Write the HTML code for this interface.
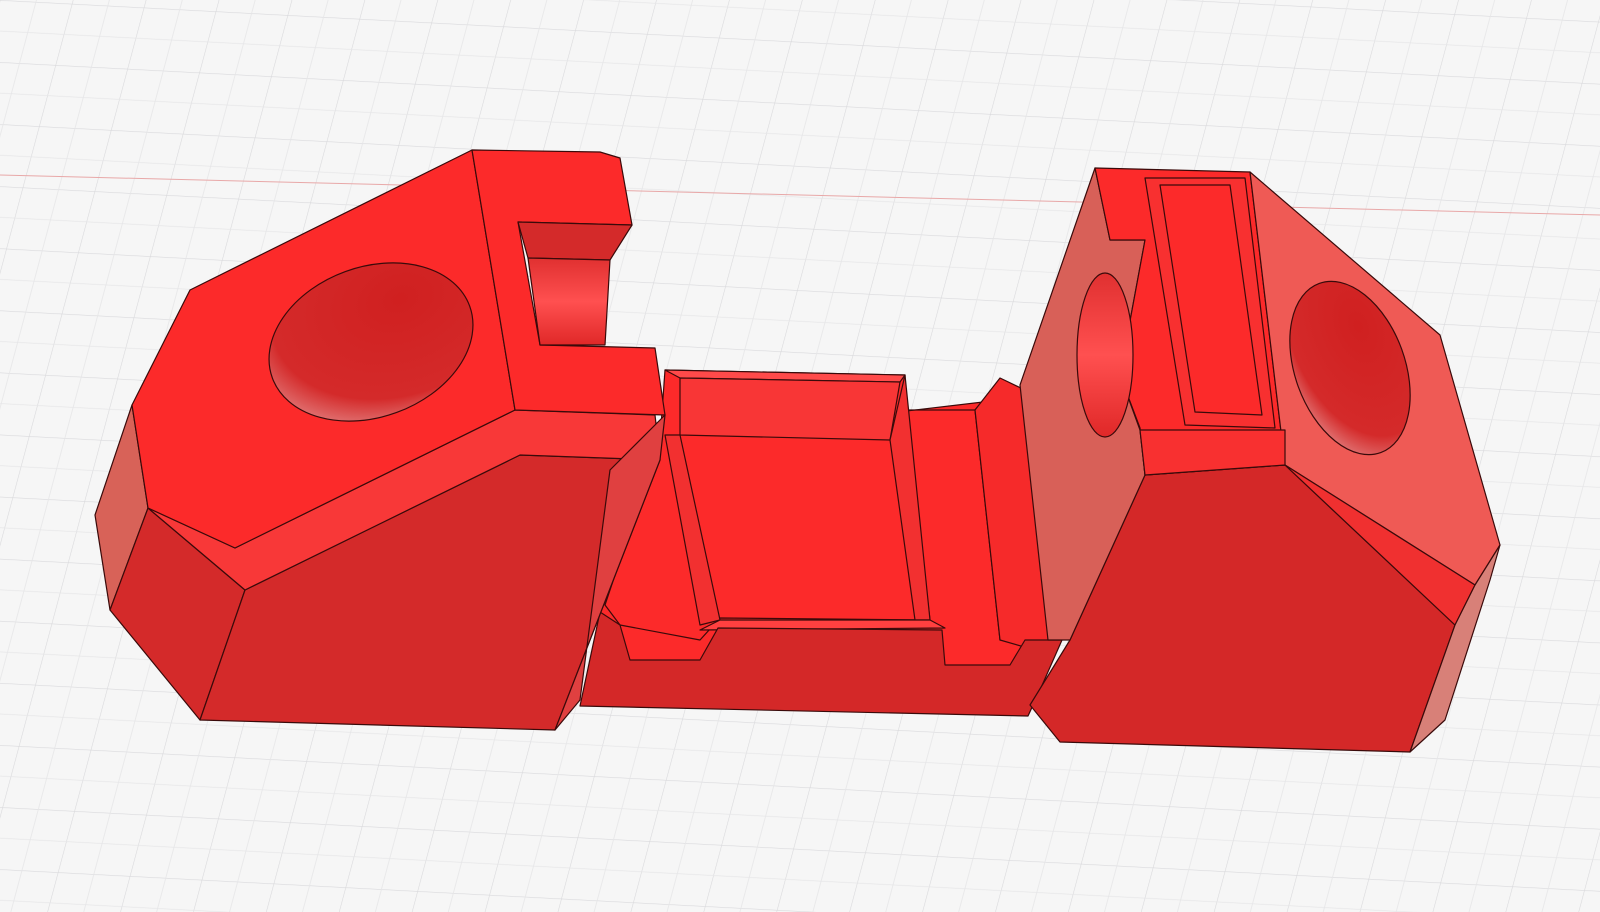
<!DOCTYPE html>
<html><head><meta charset="utf-8"><style>
html,body{margin:0;padding:0;background:#f5f5f5;width:1600px;height:912px;overflow:hidden}
svg{display:block}
</style></head><body>
<svg width="1600" height="912" viewBox="0 0 1600 912" xmlns="http://www.w3.org/2000/svg">
<defs>
<pattern id="g" width="72" height="62" patternUnits="userSpaceOnUse" patternTransform="rotate(3) skewX(-12)">
<rect width="72" height="62" fill="#f6f6f6"/>
<path d="M0 0H72M0 0V62" stroke="#d9d9dc" stroke-width="1.2" fill="none"/>
<path d="M0 31H72M36 0V62" stroke="#e6e6e8" stroke-width="0.8" fill="none"/>
</pattern>
<radialGradient id="hole" cx="0.7" cy="0.3" r="0.9">
<stop offset="0" stop-color="#d02020"/><stop offset="0.7" stop-color="#d42a2a"/><stop offset="1" stop-color="#e8a0a0"/>
</radialGradient>
<linearGradient id="cyl" x1="0" y1="0" x2="0" y2="1">
<stop offset="0" stop-color="#e03030"/><stop offset="0.5" stop-color="#ff5050"/><stop offset="1" stop-color="#e02828"/>
</linearGradient>
</defs>
<rect width="1600" height="912" fill="url(#g)"/>
<line x1="0" y1="175" x2="1600" y2="215" stroke="#e8a8a8" stroke-width="1"/>
<g stroke="#3a0a0a" stroke-width="1.2" stroke-linejoin="round">
<!-- middle bed -->
<polygon points="610,470 660,440 1000,400 1060,640 1030,700 590,700 600,610" fill="#fc2a2a"/>
<polygon points="665,370 905,375 905,410 975,410 1000,380 1025,395 1050,640 1000,640 975,410 905,410 930,620 720,618 700,640 620,625 605,605 660,440" fill="#fc2a2a"/>
<polygon points="665,370 680,378 900,382 905,375" fill="#ff4a4a"/>
<polygon points="680,378 900,382 890,440 680,435" fill="#f83636"/>
<polygon points="665,435 680,435 720,620 700,625" fill="#f23030"/>
<polygon points="890,440 905,375 930,620 915,620" fill="#f23030"/>
<polygon points="720,620 700,630 945,628 930,620" fill="#ff4040"/>
<polygon points="975,410 1000,378 1025,390 1050,640 1035,650 1000,640" fill="#f62a2a"/>
<!-- middle base front -->
<polygon points="600,612 620,625 630,660 700,660 718,628 942,630 945,665 1010,665 1025,640 1062,640 1040,690 1028,716 580,706" fill="#d42828"/>
<!-- left block -->
<polygon points="95,515 132,405 148,508 110,610" fill="#d86258"/>
<polygon points="110,610 148,508 245,590 200,720" fill="#d42a2a"/>
<polygon points="245,590 520,455 660,460 555,730 200,720" fill="#d42a2a"/>
<polygon points="148,508 235,548 515,410 655,415 660,460 520,455 245,590" fill="#f83838"/>
<polygon points="132,405 190,290 472,150 515,410 235,548 148,508" fill="#fc2a2a"/>
<polygon points="472,150 600,152 620,158 632,225 518,222 540,345 655,348 665,415 515,410" fill="#fc2a2a"/>
<polygon points="518,222 632,225 610,260 528,258" fill="#d42a2a"/>
<polygon points="528,258 610,260 605,345 540,345" fill="url(#cyl)"/>
<polygon points="555,730 660,460 665,415 610,470 580,700" fill="#e04040"/>
<ellipse cx="371" cy="342" rx="105" ry="75" transform="rotate(-20 371 342)" fill="url(#hole)"/>
<!-- right block -->
<polygon points="1145,475 1285,465 1455,625 1410,752 1060,742 1030,705 1070,640" fill="#d42828"/>
<polygon points="1020,385 1095,168 1110,240 1145,240 1120,375 1140,430 1145,475 1070,640 1048,640" fill="#d86058"/>
<polygon points="1095,168 1250,172 1285,465 1145,475 1140,428 1120,375 1145,240 1110,240" fill="#fc2a2a"/>
<polygon points="1250,172 1440,335 1500,545 1475,585 1285,465" fill="#ef5a55"/>
<polygon points="1145,178 1245,178 1275,428 1185,425" fill="#f83030"/>
<polygon points="1160,185 1230,185 1262,415 1195,412" fill="#fc2a2a"/>
<polygon points="1140,430 1285,430 1285,465 1145,475" fill="#f83030"/>
<polygon points="1285,465 1475,585 1455,625" fill="#f03030"/>
<polygon points="1455,625 1475,585 1500,545 1490,580 1445,720 1410,752" fill="#d88078"/>
<ellipse cx="1105" cy="355" rx="28" ry="82" fill="url(#cyl)"/>
<ellipse cx="1350" cy="368" rx="55" ry="90" transform="rotate(-20 1350 368)" fill="url(#hole)"/>
</g>
</svg>
</body></html>
